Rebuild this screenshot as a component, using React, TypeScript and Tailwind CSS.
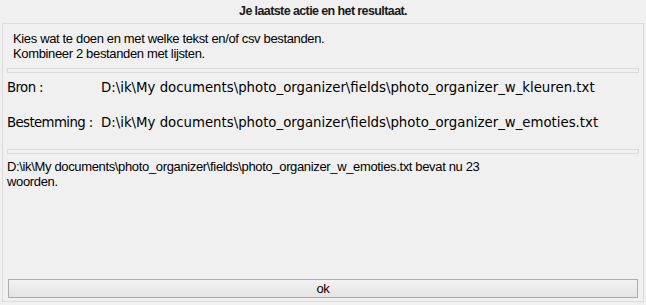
export default function App() {
  return (
    <div
      className="w-[646px] h-[305px] bg-[#f0f0f0] text-[13px] tracking-[-0.35px] text-black overflow-hidden flex flex-col"
      style={{ fontFamily: '"Liberation Sans", Arial, sans-serif' }}
    >
      <div className="h-[23px] flex items-center justify-center font-bold text-[12.5px] tracking-[-0.6px] text-[#1a1a1a]">
        Je laatste actie en het resultaat.
      </div>
      <div className="mx-[2px] mb-[3px] flex-1 border border-[#dcdcdc] flex flex-col px-[4px]">
        <div className="pl-[6px] pt-[7px] leading-[15px]">
          <div>Kies wat te doen en met welke tekst en/of csv bestanden.</div>
          <div>Kombineer 2 bestanden met lijsten.</div>
        </div>
        <div className="mt-[7px] h-[5px] border border-[#dadada] bg-[#f0f0f0]" />
        <div
          className="mt-[6px] grid grid-cols-[94px_1fr] leading-[18px] gap-y-[17px] text-[13.3px] tracking-normal"
          style={{ fontFamily: '"DejaVu Sans", Verdana, sans-serif' }}
        >
          <div className="tracking-[-0.6px]">Bron :</div>
          <div>D:\ik\My documents\photo_organizer\fields\photo_organizer_w_kleuren.txt</div>
          <div className="tracking-[-0.6px]">Bestemming :</div>
          <div>D:\ik\My documents\photo_organizer\fields\photo_organizer_w_emoties.txt</div>
        </div>
        <div className="mt-[17px] h-[5px] border border-[#dadada] bg-[#f0f0f0]" />
        <div className="mt-[5px] leading-[15px]">
          <div>D:\ik\My documents\photo_organizer\fields\photo_organizer_w_emoties.txt bevat nu 23</div>
          <div>woorden.</div>
        </div>
        <div className="flex-1" />
        <button className="mb-[3px] mx-[1px] h-[19px] border border-[#adadad] bg-gradient-to-b from-[#f2f2f2] to-[#e4e4e4] flex items-center justify-center leading-none text-[13px]">
          ok
        </button>
      </div>
    </div>
  );
}
